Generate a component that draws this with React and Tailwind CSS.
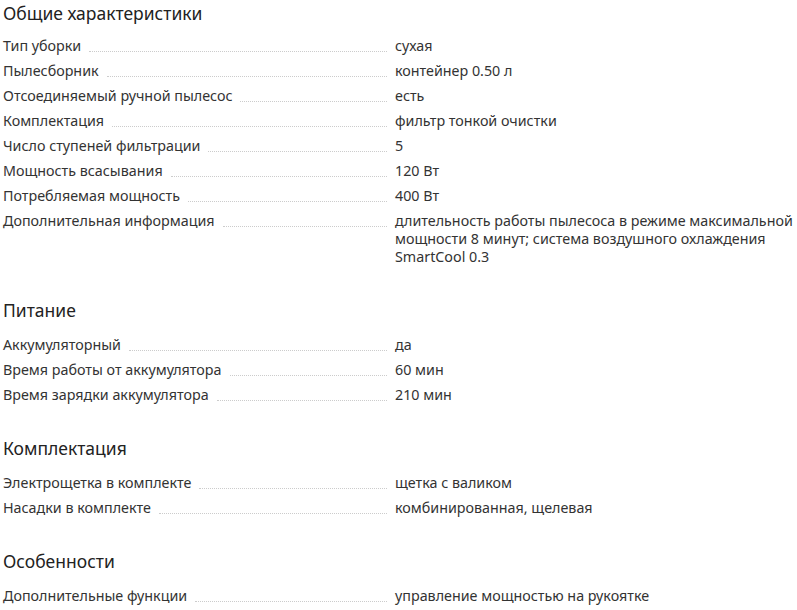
import React from "react";

const sections = [
  {
    title: "Общие характеристики",
    rows: [
      ["Тип уборки", "сухая"],
      ["Пылесборник", "контейнер 0.50 л"],
      ["Отсоединяемый ручной пылесос", "есть"],
      ["Комплектация", "фильтр тонкой очистки"],
      ["Число ступеней фильтрации", "5"],
      ["Мощность всасывания", "120 Вт"],
      ["Потребляемая мощность", "400 Вт"],
      [
        "Дополнительная информация",
        "длительность работы пылесоса в режиме максимальной мощности 8 минут; система воздушного охлаждения SmartCool 0.3",
      ],
    ],
  },
  {
    title: "Питание",
    rows: [
      ["Аккумуляторный", "да"],
      ["Время работы от аккумулятора", "60 мин"],
      ["Время зарядки аккумулятора", "210 мин"],
    ],
  },
  {
    title: "Комплектация",
    rows: [
      ["Электрощетка в комплекте", "щетка с валиком"],
      ["Насадки в комплекте", "комбинированная, щелевая"],
    ],
  },
  {
    title: "Особенности",
    rows: [["Дополнительные функции", "управление мощностью на рукоятке"]],
  },
];

export default function App() {
  return (
    <div
      className="w-[797px] h-[610px] overflow-hidden bg-white pl-[3px] text-[#333]"
      style={{ fontFamily: '"Noto Sans", "Open Sans", sans-serif' }}
    >
      {sections.map((s, i) => (
        <div key={i} className={i === 0 ? "pt-[1px]" : "mt-[32px]"}>
          <h2
            className={
              "text-[17.5px] leading-[24px] font-normal text-[#222] " +
              (i === 0 ? "mb-[12px]" : "mb-[14px]")
            }
          >
            {s.title}
          </h2>
          <div className="flex flex-col gap-[7px]">
            {s.rows.map(([k, v], j) => (
              <div key={j} className="flex text-[14.3px] leading-[18px]">
                <div className="w-[392px] shrink-0 flex items-start">
                  <span className="whitespace-nowrap">{k}</span>
                  <span className="flex-1 ml-[8px] mr-[8px] h-[15px] border-b border-dotted border-[#ccc]"></span>
                </div>
                <div className="flex-1 pr-[1px]">{v}</div>
              </div>
            ))}
          </div>
        </div>
      ))}
    </div>
  );
}
